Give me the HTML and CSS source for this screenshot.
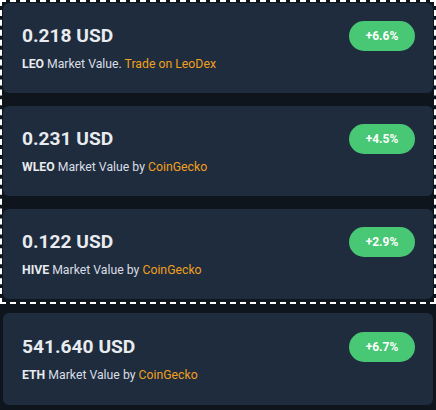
FILE: index.html
```html
<!DOCTYPE html>
<html>
<head>
<meta charset="utf-8">
<link rel="stylesheet" href="styles.css">
</head>
<body>
<div class="group">
  <div class="card">
    <div class="info">
      <div class="price">0.218 USD</div>
      <div class="sub"><b>LEO</b> Market Value. <span class="link">Trade on LeoDex</span></div>
    </div>
    <span class="badge">+6.6%</span>
  </div>
  <div class="card">
    <div class="info">
      <div class="price">0.231 USD</div>
      <div class="sub"><b>WLEO</b> Market Value by <span class="link">CoinGecko</span></div>
    </div>
    <span class="badge">+4.5%</span>
  </div>
  <div class="card">
    <div class="info">
      <div class="price">0.122 USD</div>
      <div class="sub"><b>HIVE</b> Market Value by <span class="link">CoinGecko</span></div>
    </div>
    <span class="badge">+2.9%</span>
  </div>
</div>
<div class="card solo">
  <div class="info">
    <div class="price">541.640 USD</div>
    <div class="sub"><b>ETH</b> Market Value by <span class="link">CoinGecko</span></div>
  </div>
  <span class="badge">+6.7%</span>
</div>
</body>
</html>
```
FILE: styles.css
```css
html, body {
  margin: 0;
  padding: 0;
  background: #0e151c;
  font-family: Roboto, "Liberation Sans", sans-serif;
  color: #e6e9ed;
}
body {
  width: 436px;
  height: 410px;
  overflow: hidden;
}
.group {
  border: 2px dashed #ffffff;
  padding: 1px 1px 3px 1px;
  display: flex;
  flex-direction: column;
  gap: 13px;
}
.card {
  background: #1f2c3d;
  border-radius: 6px;
  padding: 21px 18px 18px 19px;
  height: 90px;
  box-sizing: border-box;
  display: flex;
  justify-content: space-between;
  align-items: flex-start;
}
.card.solo {
  margin: 9px 3px 0 3px;
  height: 92px;
  padding-top: 22px;
}
.price {
  font-size: 19.2px;
  line-height: 23px;
  font-weight: 700;
  color: #e8ebef;
}
.sub {
  margin-top: 8px;
  font-size: 12.25px;
  line-height: 18px;
  color: #d9dee5;
}
.sub b {
  font-weight: 700;
  color: #e8ebef;
}
.link {
  color: #f0a020;
}
.badge {
  margin-top: -3px;
  width: 66px;
  height: 30px;
  border-radius: 15px;
  background: #48c774;
  color: #ffffff;
  font-size: 12px;
  font-weight: 700;
  display: flex;
  align-items: center;
  justify-content: center;
}
```
